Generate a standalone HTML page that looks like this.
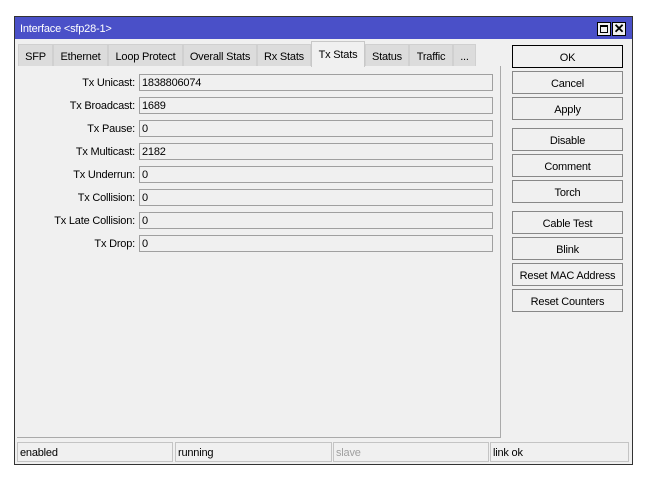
<!DOCTYPE html><html><head><style>
*{box-sizing:border-box;margin:0;padding:0}
body{width:647px;height:484px;background:#fff;font-family:"Liberation Sans",sans-serif;font-size:11px;letter-spacing:-0.2px;color:#000;position:relative;overflow:hidden}
.a{position:absolute}
.win{left:14px;top:16px;width:619px;height:449px;border:1px solid #333;background:#f0f0f0}
.title{left:15px;top:17px;width:617px;height:22px;background:#4a50c8;color:#fff;padding:6px 0 0 5px}
.tb{width:14px;height:14px;border:1px solid #000;background:#f0f0f0;top:22px}
.tab{top:44px;height:22px;background:#dcdcdc;border:1px solid #d0d0d0;border-bottom:none;text-align:center;padding-top:6px}
.act{top:41px;height:26px;background:#f0f0f0;border:1px solid #c8c8c8;border-bottom:none;padding-top:7px}
.panel{left:17px;top:66px;width:484px;height:372px;border-right:1px solid #aaa;border-bottom:1px solid #aaa}
.lbl{left:20px;width:115px;text-align:right;height:17px;padding-top:3px}
.fld{left:139px;width:354px;height:17px;border:1px solid #a0a0a0;background:#f0f0f0;padding:2px 0 0 2px}
.btn{left:512px;width:111px;height:23px;border:1px solid #888;background:#f0f0f0;text-align:center;padding-top:6px}
.st{top:442px;height:20px;border:1px solid #c4c4c4;padding:4px 0 0 2px}
</style></head><body>
<div class="a win"></div>
<div class="a title">Interface &lt;sfp28-1&gt;</div>
<div class="a tb" style="left:597px"><div class="a" style="left:2px;top:2px;width:8px;height:8px;border:1px solid #000;border-top-width:2px"></div></div>
<div class="a tb" style="left:612px;font-weight:bold;font-size:13px;line-height:12px;text-align:center">✕</div>
<div class="a tab" style="left:18px;width:35px">SFP</div>
<div class="a tab" style="left:53px;width:55px">Ethernet</div>
<div class="a tab" style="left:108px;width:75px">Loop Protect</div>
<div class="a tab" style="left:183px;width:74px">Overall Stats</div>
<div class="a tab" style="left:257px;width:54px">Rx Stats</div>
<div class="a tab act" style="left:311px;width:54px">Tx Stats</div>
<div class="a tab" style="left:365px;width:44px">Status</div>
<div class="a tab" style="left:409px;width:44px">Traffic</div>
<div class="a tab" style="left:453px;width:23px">...</div>
<div class="a panel"></div>
<div class="a lbl" style="top:74px">Tx Unicast:</div><div class="a fld" style="top:74px">1838806074</div>
<div class="a lbl" style="top:97px">Tx Broadcast:</div><div class="a fld" style="top:97px">1689</div>
<div class="a lbl" style="top:120px">Tx Pause:</div><div class="a fld" style="top:120px">0</div>
<div class="a lbl" style="top:143px">Tx Multicast:</div><div class="a fld" style="top:143px">2182</div>
<div class="a lbl" style="top:166px">Tx Underrun:</div><div class="a fld" style="top:166px">0</div>
<div class="a lbl" style="top:189px">Tx Collision:</div><div class="a fld" style="top:189px">0</div>
<div class="a lbl" style="top:212px">Tx Late Collision:</div><div class="a fld" style="top:212px">0</div>
<div class="a lbl" style="top:235px">Tx Drop:</div><div class="a fld" style="top:235px">0</div>
<div class="a btn" style="top:45px;border:1px solid #000">OK</div>
<div class="a btn" style="top:71px">Cancel</div>
<div class="a btn" style="top:97px">Apply</div>
<div class="a btn" style="top:128px">Disable</div>
<div class="a btn" style="top:154px">Comment</div>
<div class="a btn" style="top:180px">Torch</div>
<div class="a btn" style="top:211px">Cable Test</div>
<div class="a btn" style="top:237px">Blink</div>
<div class="a btn" style="top:263px">Reset MAC Address</div>
<div class="a btn" style="top:289px">Reset Counters</div>
<div class="a st" style="left:17px;width:156px">enabled</div>
<div class="a st" style="left:175px;width:157px">running</div>
<div class="a st" style="left:333px;width:156px;color:#a0a0a0">slave</div>
<div class="a st" style="left:490px;width:139px">link ok</div>
</body></html>
